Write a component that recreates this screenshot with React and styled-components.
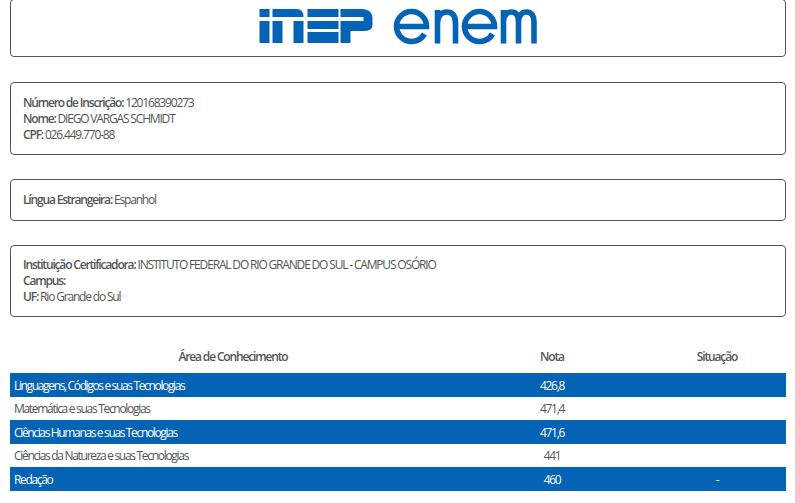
import React from 'react'
import styled, { createGlobalStyle } from 'styled-components'

const GlobalStyle = createGlobalStyle`
  html, body {
    margin: 0;
    padding: 0;
    background: #fff;
    overflow: hidden;
  }
  body {
    font-family: 'Open Sans', 'Liberation Sans', sans-serif;
    font-size: 12px;
    color: #555;
    letter-spacing: -1.17px;
  }
`

const Page = styled.div`
  width: 776px;
  height: 503px;
  padding: 0 9px 0 10px;
  display: flex;
  flex-direction: column;
  overflow: hidden;
`

const LogoBox = styled.div`
  flex-shrink: 0;
  height: 58px;
  margin-top: -1px;
  box-sizing: border-box;
  border: 1px solid #555;
  border-radius: 4px;
  display: flex;
  justify-content: center;
  align-items: flex-start;
  margin-bottom: 25px;
`

const InfoBox = styled.div`
  flex-shrink: 0;
  height: ${props => props.$height}px;
  box-sizing: border-box;
  border: 1px solid #555;
  border-radius: 4px;
  padding: 0 12px;
  display: flex;
  flex-direction: column;
  justify-content: center;
  margin-bottom: 24px;
`

const Line = styled.div`
  line-height: 16px;
  height: 16px;
  white-space: nowrap;
`

const Label = styled.b`
  font-weight: 600;
  color: #555;
`

const Table = styled.div`
  flex-shrink: 0;
  display: flex;
  flex-direction: column;
  margin-top: 4px;
`

const Row = styled.div`
  display: grid;
  grid-template-columns: 446px 192px 138px;
  align-items: center;
  height: ${props => props.$height}px;
  box-sizing: border-box;
  padding-bottom: ${props => (props.$head ? 5 : 0)}px;
  background: ${props => (props.$filled ? '#0563b5' : '#fff')};
  color: ${props => (props.$filled ? '#fff' : '#555')};
  font-weight: ${props => (props.$head ? 600 : props.$filled ? 500 : 400)};
  letter-spacing: ${props => (props.$filled ? -1.35 : props.$head ? -1.15 : -1.3)}px;
`

const AreaCell = styled.div`
  padding-left: ${props => (props.$center ? 0 : 4)}px;
  text-align: ${props => (props.$center ? 'center' : 'left')};
`

const Cell = styled.div`
  text-align: center;
`

const LogoSvg = styled.svg`
  display: block;
  flex-shrink: 0;
`

const LogoStrokes = styled.g`
  fill: none;
  stroke: #0563b5;
  stroke-width: 5.6;
`

// logo, in page coordinates
const InepLogo = () => (
  <LogoSvg width="285" height="46" viewBox="256.5 1 285 46" fill="#0563b5">
    {/* inep */}
    <rect x="260" y="10" width="10" height="8" />
    <rect x="260" y="22" width="10" height="22" />
    <path d="M273 10H297Q304 10 304 18H273Z" />
    <rect x="273" y="22" width="10" height="22" />
    <rect x="294" y="22" width="10" height="22" />
    <rect x="308" y="10" width="31" height="8" />
    <rect x="308" y="22" width="31" height="8" />
    <rect x="308" y="33" width="31" height="11" />
    <path d="M341 10H362Q373 10 373 20V26Q373 32 364 32H351V44H341V22H364V18H341Z" />
    {/* enem */}
    <LogoStrokes>
      <path d="M397 27.5H427A15 15 0 0 0 397 27.5A15 15 0 0 0 425 35" />
      <path d="M438 11V44.5M438 24C438 16 443 13 447 13C453 13 456 17 456 24V44.5" />
      <path d="M465 27.5H495A15 15 0 0 0 465 27.5A15 15 0 0 0 493 35" />
      <path d="M504 11V44.5M504 23C504 16 508 13 512 13C517 13 519 17 519 23V44.5M519 23C519 16 523 13 527 13C532 13 534.5 17 534.5 23V44.5" />
    </LogoStrokes>
  </LogoSvg>
)

const rows = [
  ['Linguagens, Códigos e suas Tecnologias', '426,8', '', 24],
  ['Matemática e suas Tecnologias', '471,4', '', 23],
  ['Ciências Humanas e suas Tecnologias', '471,6', '', 24],
  ['Ciências da Natureza e suas Tecnologias', '441', '', 23],
  ['Redação', '460', '-', 24],
]

export default function App() {
  return (
    <Page>
      <GlobalStyle />
      <LogoBox>
        <InepLogo />
      </LogoBox>
      <InfoBox $height={73}>
        <Line><Label>Número de Inscrição:</Label> 120168390273</Line>
        <Line><Label>Nome:</Label> DIEGO VARGAS SCHMIDT</Line>
        <Line><Label>CPF:</Label> 026.449.770-88</Line>
      </InfoBox>
      <InfoBox $height={42}>
        <Line><Label>Língua Estrangeira:</Label> Espanhol</Line>
      </InfoBox>
      <InfoBox $height={72}>
        <Line><Label>Instituição Certificadora:</Label> INSTITUTO FEDERAL DO RIO GRANDE DO SUL - CAMPUS OSÓRIO</Line>
        <Line><Label>Campus:</Label></Line>
        <Line><Label>UF:</Label> Rio Grande do Sul</Line>
      </InfoBox>
      <Table>
        <Row $head $height={28}>
          <AreaCell $center>Área de Conhecimento</AreaCell>
          <Cell>Nota</Cell>
          <Cell>Situação</Cell>
        </Row>
        {rows.map(([area, nota, situacao, height], i) => (
          <Row key={area} $filled={i % 2 === 0} $height={height}>
            <AreaCell>{area}</AreaCell>
            <Cell>{nota}</Cell>
            <Cell>{situacao}</Cell>
          </Row>
        ))}
      </Table>
    </Page>
  )
}
